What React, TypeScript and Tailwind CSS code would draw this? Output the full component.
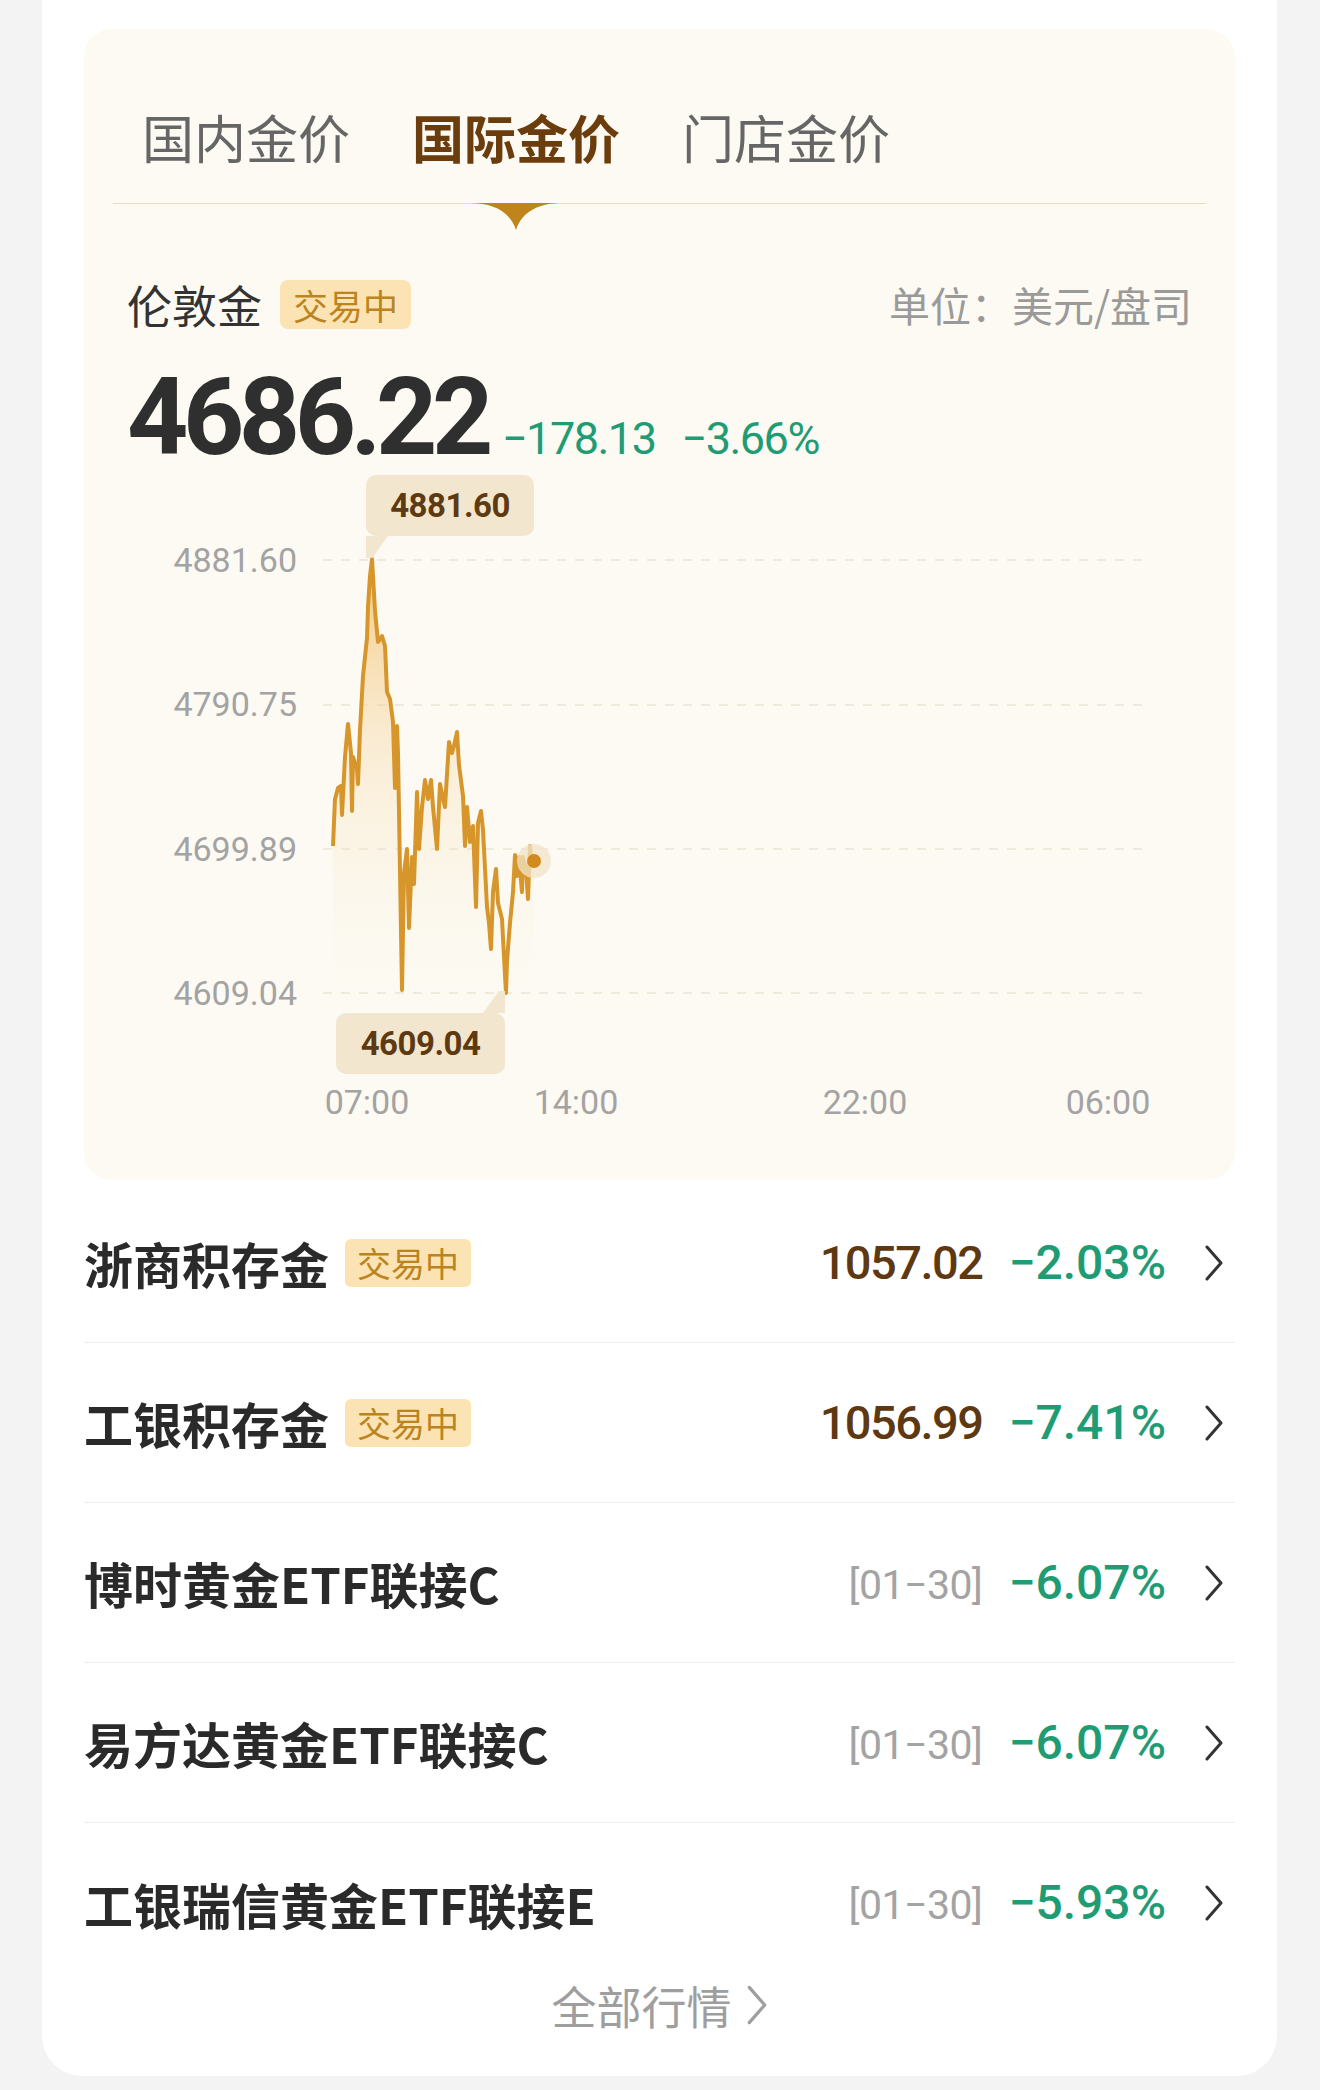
import React from 'react'

// page coords of the intraday line, shifted into the plot's local space below
const RAW: [number, number][] = [
  [333, 845], [335, 798], [338, 787], [341, 785], [342, 814], [345, 756], [348, 723], [351, 752],
  [352, 810], [353, 756], [357, 768], [358, 783], [360, 729], [363, 675], [367, 637], [368, 606],
  [370, 575], [372, 558], [373, 575], [375, 610], [378, 641], [382, 635], [385, 645], [387, 691],
  [390, 698], [393, 721], [395, 787], [397, 725], [398, 752], [402, 989], [404, 872], [407, 848],
  [409, 927], [412, 856], [414, 883], [417, 791], [419, 848], [422, 806], [425, 779], [428, 798],
  [431, 779], [433, 806], [437, 848], [440, 783], [443, 798], [445, 806], [449, 741], [452, 752],
  [454, 745], [457, 731], [459, 764], [463, 795], [465, 845], [467, 806], [470, 841], [473, 825],
  [476, 906], [478, 822], [481, 810], [483, 829], [487, 906], [489, 922], [491, 948], [493, 891],
  [496, 868], [498, 902], [502, 918], [504, 956], [506, 992], [507, 960], [510, 922], [513, 891],
  [515, 854], [517, 875], [519, 856], [522, 891], [523, 856], [526, 868], [528, 898], [530, 845],
  [532, 864], [534, 860],
]

const pts = RAW.map(([x, y]) => [x - 323, y - 500])
const linePath = pts.map(([x, y], i) => `${i ? 'L' : 'M'}${x} ${y}`).join(' ')
const areaPath = `${linePath} L${pts[pts.length - 1][0]} 520 L${pts[0][0]} 520 Z`

const yLabels = ['4881.60', '4790.75', '4699.89', '4609.04']
const gridY = [59, 204, 348, 492]

interface Row {
  name: string
  trading?: boolean
  value?: string
  date?: string
  change: string
}

const rows: Row[] = [
  { name: '浙商积存金', trading: true, value: '1057.02', change: '−2.03%' },
  { name: '工银积存金', trading: true, value: '1056.99', change: '−7.41%' },
  { name: '博时黄金ETF联接C', date: '[01−30]', change: '−6.07%' },
  { name: '易方达黄金ETF联接C', date: '[01−30]', change: '−6.07%' },
  { name: '工银瑞信黄金ETF联接E', date: '[01−30]', change: '−5.93%' },
]

function Chevron({ className }: { className?: string }) {
  return (
    <svg viewBox="0 0 20 36" className={className} fill="none" stroke="currentColor" strokeWidth="3" strokeLinecap="round" strokeLinejoin="round">
      <path d="M3 2 L17 18 L3 34" />
    </svg>
  )
}

function Badge({ big }: { big?: boolean }) {
  return (
    <span
      className={
        big
          ? 'h-[49px] px-[13px] rounded-[8px] bg-[#fbe3b3] text-[#bb8420] text-[35px] leading-[49px]'
          : 'h-[48px] px-[12px] rounded-[6px] bg-[#fbe3b3] text-[#bb8420] text-[34px] leading-[48px]'
      }
    >
      交易中
    </span>
  )
}

export default function App() {
  const tabs = ['国内金价', '国际金价', '门店金价']

  return (
    <div className="min-h-[2090px] bg-[#f3f3f3] px-[42px] font-['Noto_Sans_CJK_SC',sans-serif]">
      <div className="w-[1235px] bg-white rounded-b-[40px] px-[42px] pt-[29px] pb-[41px]">
        {/* Gold price panel */}
        <div className="h-[1151px] rounded-[28px] bg-[#fcfaf2]">
          <div className="mx-[29px] pt-[77px] pl-[29px] border-b border-[#e8dcc0] flex gap-[62px]">
            {tabs.map((t, i) => (
              <div
                key={t}
                className={`relative pb-[35px] text-[52px] leading-[62px] ${
                  i === 1 ? 'font-bold text-[#6b3d0c]' : 'text-[#666666]'
                }`}
              >
                {t}
                {i === 1 && (
                  <svg viewBox="0 0 92 28" className="absolute left-1/2 top-full -translate-x-1/2 w-[92px] h-[28px]">
                    <path d="M0 0 H92 C70 0 52 8 46 27 C40 8 22 0 0 0 Z" fill="#c0841c" />
                  </svg>
                )}
              </div>
            ))}
          </div>

          <div className="mt-[76px] px-[43px] h-[49px] flex items-center justify-between">
            <div className="flex items-center gap-[18px]">
              <span className="text-[45px] leading-none text-[#333333]">伦敦金</span>
              <Badge big />
            </div>
            <span className="text-[41px] leading-none text-[#9a9a9a]">单位：美元/盘司</span>
          </div>

          <div className="mt-[35px] px-[43px] flex items-baseline font-['Roboto',sans-serif]">
            <span className="text-[107px] leading-none font-bold tracking-[-5.5px] text-[#2f2f2f]">4686.22</span>
            <span className="ml-[14px] text-[45px] leading-none tracking-[-1.5px] text-[#1f9c74]">−178.13</span>
            <span className="ml-[26px] text-[45px] leading-none tracking-[-1.5px] text-[#1f9c74]">−3.66%</span>
          </div>

          {/* Chart */}
          <div className="relative mt-[30px] px-[43px] flex h-[520px]">
            <div className="w-[170px] h-[520px] pt-[39px] pb-[8px] flex flex-col justify-between items-end font-['Roboto',sans-serif] text-[34px] leading-[40px] text-[#a3a3a3]">
              {yLabels.map((l) => (
                <span key={l} className="h-[40px]">{l}</span>
              ))}
            </div>
            <svg viewBox="0 0 824 520" className="ml-[26px] w-[824px] h-[520px] overflow-visible">
              <defs>
                <linearGradient id="goldFill" x1="0" y1="0" x2="0" y2="1">
                  <stop offset="0%" stopColor="#f3b95a" stopOpacity="0.75" />
                  <stop offset="40%" stopColor="#f6d29a" stopOpacity="0.35" />
                  <stop offset="100%" stopColor="#fcfaf2" stopOpacity="0" />
                </linearGradient>
              </defs>
              {gridY.map((y) => (
                <line key={y} x1="0" x2="824" y1={y} y2={y} stroke="#ebe4d5" strokeWidth="1.5" strokeDasharray="9 9" />
              ))}
              <path d={areaPath} fill="url(#goldFill)" />
              <path d={linePath} fill="none" stroke="#d6962b" strokeWidth="4" strokeLinejoin="round" />
              <circle cx="211" cy="360" r="17" fill="#f1e3c8" opacity="0.75" />
              <circle cx="211" cy="360" r="7" fill="#d28a1e" />
            </svg>

            {/* high marker */}
            <div className="absolute left-[282px] top-[-26px]">
              <div className="w-[168px] h-[61px] rounded-[10px] bg-[#f3e6cf] flex items-center justify-center font-['Roboto',sans-serif] font-bold text-[33px] tracking-[-0.5px] text-[#5e3a12]">
                4881.60
              </div>
              <svg viewBox="0 0 22 22" className="w-[22px] h-[22px] block">
                <path d="M0 0 H22 L6 22 H0 Z" fill="#f3e6cf" />
              </svg>
            </div>

            {/* low marker */}
            <div className="absolute left-[252px] top-[490px] flex flex-col items-end">
              <svg viewBox="0 0 22 22" className="w-[22px] h-[22px] block">
                <path d="M22 0 V22 H0 L16 0 Z" fill="#f3e6cf" />
              </svg>
              <div className="w-[169px] h-[61px] rounded-[10px] bg-[#f3e6cf] flex items-center justify-center font-['Roboto',sans-serif] font-bold text-[33px] tracking-[-0.5px] text-[#5e3a12]">
                4609.04
              </div>
            </div>
          </div>

          <div className="mt-[61px] pl-[239px] flex font-['Roboto',sans-serif] text-[34px] leading-[40px] text-[#a3a3a3]">
            <span className="w-[88px] text-center">07:00</span>
            <span className="ml-[121px] w-[88px] text-center">14:00</span>
            <span className="ml-[201px] w-[88px] text-center">22:00</span>
            <span className="ml-[155px] w-[88px] text-center">06:00</span>
          </div>
        </div>

        {/* Product list */}
        <div className="mt-[3px]">
          {rows.map((r, i) => (
            <div
              key={r.name}
              className={`h-[160px] flex items-center ${i < rows.length - 1 ? 'border-b border-[#eeeeee]' : ''}`}
            >
              <span className="text-[49px] leading-none font-bold text-[#2a2a2a]">{r.name}</span>
              {r.trading && (
                <span className="ml-[16px] flex">
                  <Badge />
                </span>
              )}
              <div className="ml-auto flex items-baseline font-['Roboto',sans-serif]">
                {r.value && (
                  <span className="text-[47px] leading-none font-medium tracking-[-1.5px] text-[#5e3810]">{r.value}</span>
                )}
                {r.date && <span className="text-[41px] leading-none tracking-[-0.5px] text-[#a3a3a3]">{r.date}</span>}
                <span className="ml-[26px] text-[48px] leading-none font-medium text-[#1f9c74]">{r.change}</span>
              </div>
              <Chevron className="ml-[38px] mr-[11px] w-[20px] h-[36px] text-[#333333]" />
            </div>
          ))}
        </div>

        <div className="mt-[-8px] h-[60px] flex items-center justify-center gap-[14px] text-[#9e9e9e]">
          <span className="text-[45px] leading-none">全部行情</span>
          <Chevron className="w-[22px] h-[42px]" />
        </div>
      </div>
    </div>
  )
}
